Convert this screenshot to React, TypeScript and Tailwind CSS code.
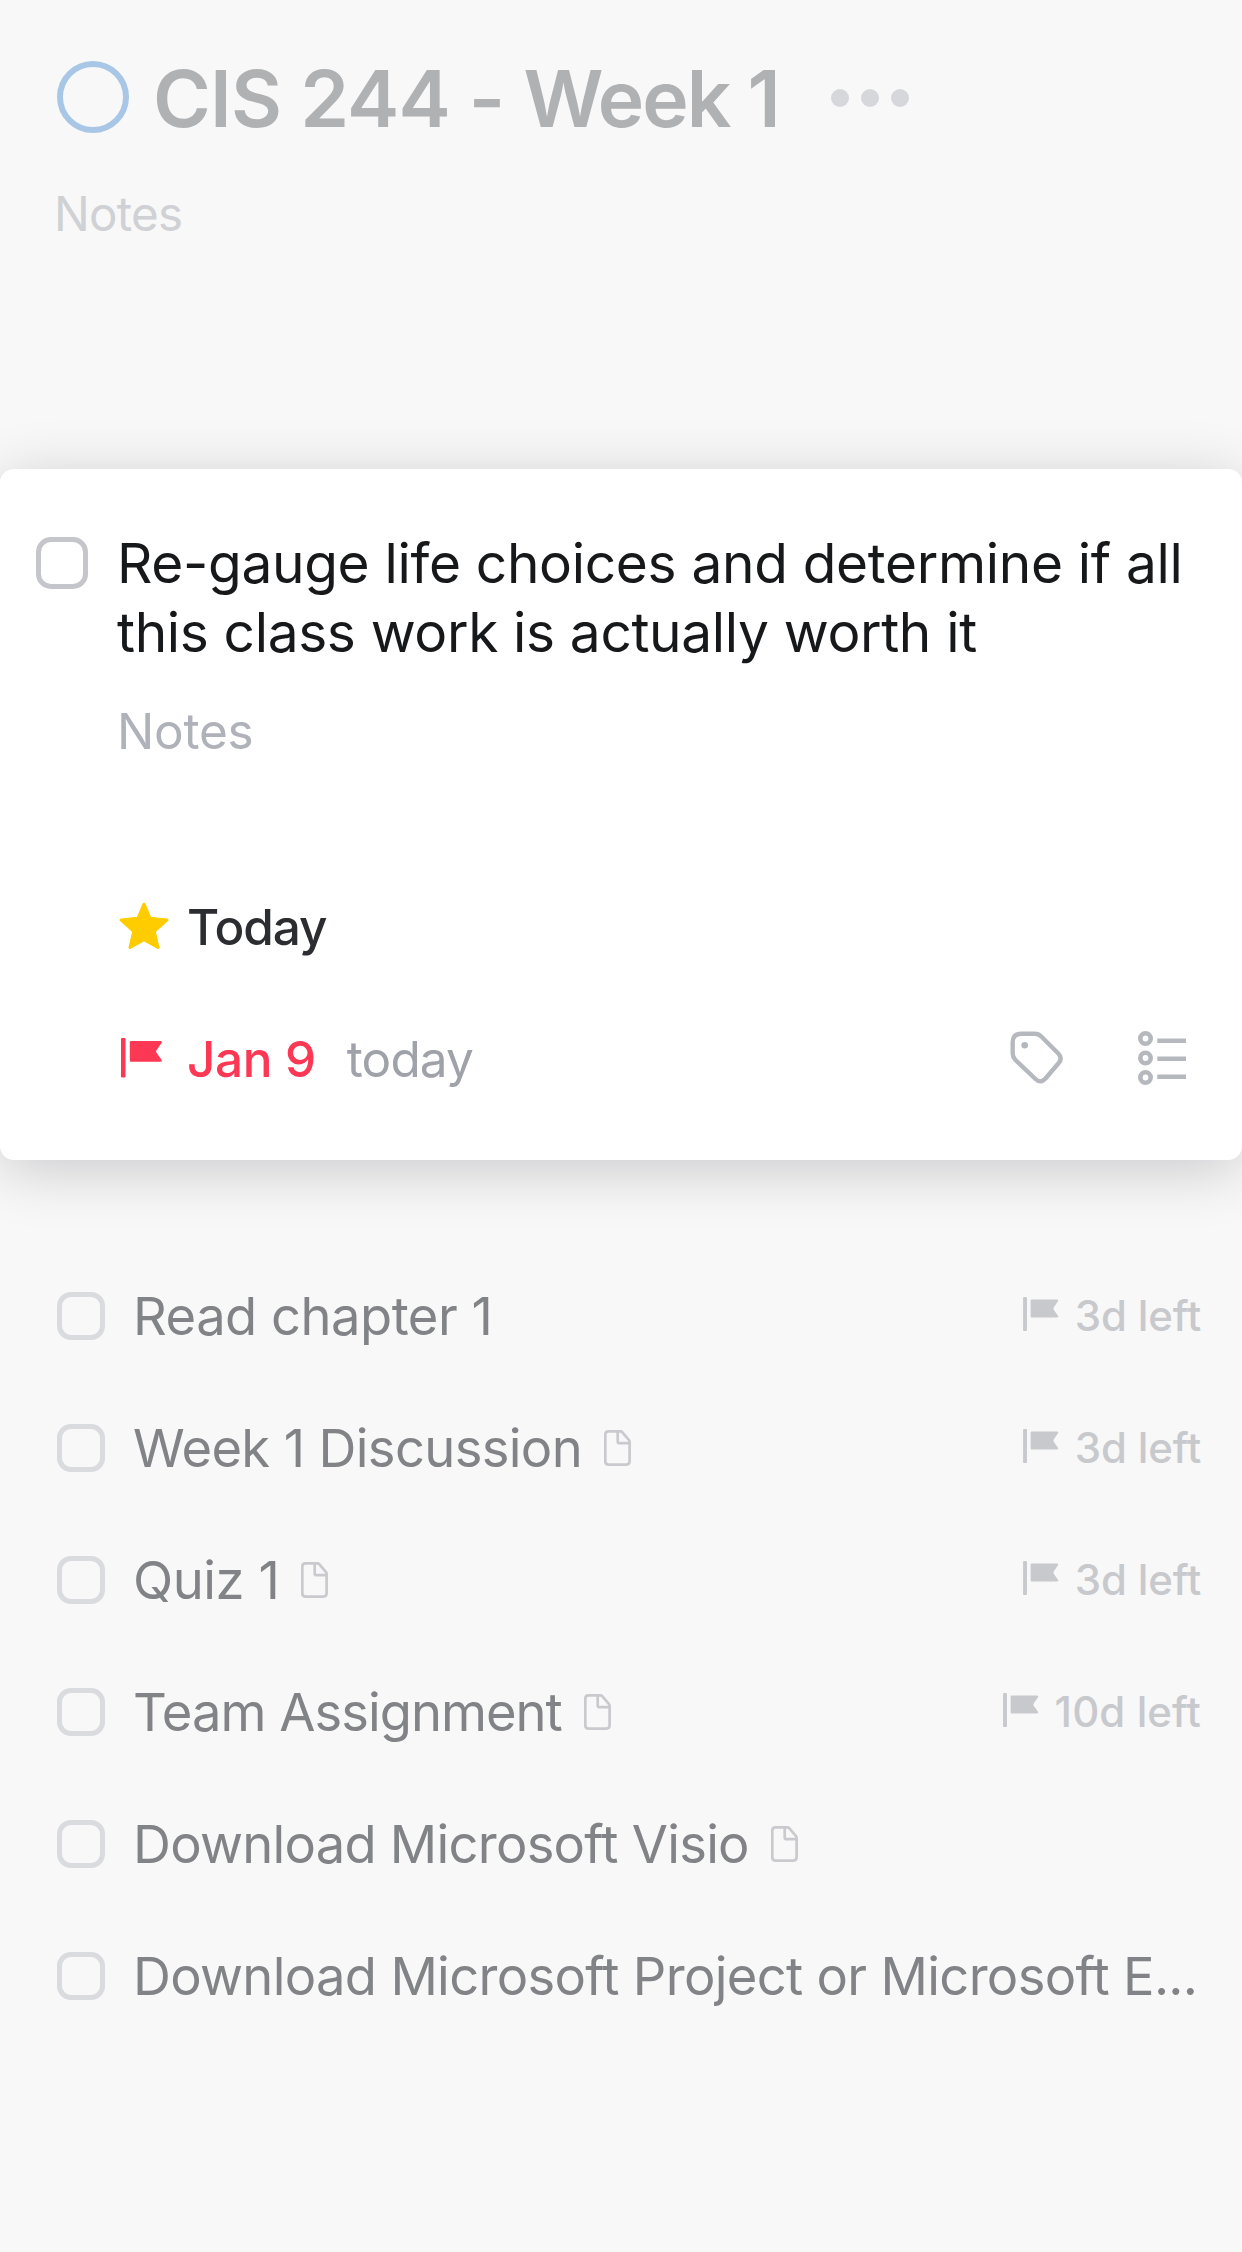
type Task = {
  title: string;
  tracking: string;
  hasNote?: boolean;
  deadline?: string;
  deadlineTracking?: string;
};

const tasks: Task[] = [
  { title: 'Read chapter 1', tracking: 'tracking-[-0.5px]', deadline: '3d left', deadlineTracking: 'tracking-[-0.19px]' },
  { title: 'Week 1 Discussion', tracking: 'tracking-[-0.64px]', hasNote: true, deadline: '3d left', deadlineTracking: 'tracking-[-0.19px]' },
  { title: 'Quiz 1', tracking: 'tracking-[-0.45px]', hasNote: true, deadline: '3d left', deadlineTracking: 'tracking-[-0.19px]' },
  { title: 'Team Assignment', tracking: 'tracking-[-0.98px]', hasNote: true, deadline: '10d left', deadlineTracking: 'tracking-[0.09px]' },
  { title: 'Download Microsoft Visio', tracking: 'tracking-[-0.74px]', hasNote: true },
  { title: 'Download Microsoft Project or Microsoft E...', tracking: 'tracking-[-0.68px]' },
];

function FlagIcon({ className }: { className: string }) {
  return (
    <svg viewBox="0 0 41 40" fill="currentColor" className={className}>
      <rect x="0" y="0" width="4.5" height="39.5" rx="1.2" />
      <path d="M10 3h29.5q2 .3 1 2l-4.8 7q-1 1.6 0 3.1l4.8 6.6q1 1.8-1 2.1H10q-1.2 0-1.2-1.2V4.2Q8.8 3 10 3z" />
    </svg>
  );
}

function NoteIcon() {
  return (
    <svg viewBox="0 0 27 36" fill="none" stroke="#cacace" strokeWidth="2.7" strokeLinejoin="round" className="h-9 w-[27px] shrink-0">
      <path d="M4.3 1.4h12.2q1 0 1.7.8l6.6 7.6q.8.9.8 2v19.5q0 3.3-3.3 3.3H4.6q-3.3 0-3.3-3.3V4.7q0-3.3 3-3.3z" />
      <path d="M13.7 1.5v9.900q0 1.800 1.800 1.800h10" />
    </svg>
  );
}

function StarIcon() {
  return (
    <svg viewBox="0 0 50 48" fill="#ffcc00" stroke="#ffcc00" strokeWidth="3" strokeLinejoin="round" className="h-12 w-[50px] shrink-0">
      <path d="M25 2.2 31 16.3 48 18 35.2 29.3 39 45.5 25 37.600 11 45.500 14.800 29.300 2 18 19 16.300z" />
    </svg>
  );
}

function TagIcon() {
  return (
    <svg viewBox="0 0 54 54" fill="none" className="h-[54px] w-[54px]">
      <path
        d="M11.5 2.7H24.5Q28.500 2.700 31.300 5.500L48.300 22.500Q53 27.500 48.300 32.500L35.500 47.500Q30.500 53 25.200 47.800L5.300 28.800Q2.700 26 2.700 22.500V11.500Q2.700 2.700 11.500 2.700z"
        stroke="#b5b8bd"
        strokeWidth="4.4"
      />
      <circle cx="14.7" cy="14.3" r="3.3" fill="#b5b8bd" />
    </svg>
  );
}

function ChecklistIcon() {
  return (
    <svg viewBox="0 0 48 54" fill="none" stroke="#b5b8bd" className="h-[54px] w-12">
      <g strokeWidth="4.6">
        <circle cx="7.5" cy="7.5" r="5.2" />
        <circle cx="7.5" cy="27" r="5.2" />
        <circle cx="7.5" cy="46.5" r="5.2" />
      </g>
      <path d="M19.3 9.7H48M19.3 27.7H48M19.3 45.7H48" strokeWidth="4.4" />
    </svg>
  );
}

function TaskRow({ task }: { task: Task }) {
  return (
    <li className="flex h-[132px] items-center pl-[57px] pr-[41px]">
      <span className="h-12 w-12 shrink-0 rounded-[14px] border-[5px] border-[#dadbde]" />
      <span className={`ml-7 whitespace-nowrap text-[52.5px] leading-[66px] text-[#828386] ${task.tracking}`}>{task.title}</span>
      {task.hasNote && (
        <span className="ml-[22px]">
          <NoteIcon />
        </span>
      )}
      {task.deadline && (
        <span className="ml-auto flex items-center text-[#c8c9cd]">
          <FlagIcon className="mb-1 h-[34.5px] w-[35.5px]" />
          <span className={`ml-4 whitespace-nowrap text-[42px] font-medium leading-[52px] ${task.deadlineTracking}`}>{task.deadline}</span>
        </span>
      )}
    </li>
  );
}

export default function App() {
  return (
    <div className="h-[2252px] w-[1242px] overflow-hidden bg-[#f8f8f8] font-['Inter',sans-serif]">
      <header className="h-[469px] pt-[57px]">
        <div className="flex h-20 items-center pl-[57px]">
          <span className="h-[72px] w-[72px] shrink-0 rounded-full border-[6px] border-[#a8c7e6]" />
          <h1 className="ml-6 mt-[3px] w-[623px] whitespace-nowrap text-[78.5px] font-semibold leading-[80px] tracking-[-1.9px] text-[#afb1b3]">
            <span className="tracking-[-0.82px]">CIS 244 - </span>Week 1
          </h1>
          <span className="ml-[55px] mt-0.5 flex gap-3">
            <i className="h-[18px] w-[18px] rounded-full bg-[#d6d7db]" />
            <i className="h-[18px] w-[18px] rounded-full bg-[#d6d7db]" />
            <i className="h-[18px] w-[18px] rounded-full bg-[#d6d7db]" />
          </span>
        </div>
        <p className="ml-[54px] mt-[47px] text-[47.5px] leading-[60px] tracking-[-0.76px] text-[#d0d1d4]">Notes</p>
      </header>

      <section className="relative h-[691px] rounded-[14px] bg-white shadow-[0_10px_60px_rgba(0,0,20,0.19)]">
        <div className="flex pl-9 pt-[60px]">
          <span className="mt-2 h-[52px] w-[52px] shrink-0 rounded-[15px] border-[5px] border-[#c5c5cc]" />
          <div className="ml-7 whitespace-nowrap">
            <p className="ml-px text-[55px] leading-[69px] tracking-[-0.32px] text-[#17181a]">Re-gauge life choices and determine if all</p>
            <p className="ml-px text-[55px] leading-[69px] tracking-[-0.35px] text-[#17181a]">this class work is actually worth it</p>
            <p className="ml-px mt-[34px] text-[49.5px] leading-[60px] tracking-[-0.26px] text-[#b0b2b9]">Notes</p>
          </div>
        </div>
        <div className="mt-[135px] flex h-[60px] items-center pl-[119px]">
          <StarIcon />
          <span className="ml-[18px] mt-px text-[49.5px] font-medium leading-[60px] tracking-[-1.07px] text-[#2b2d30]">Today</span>
        </div>
        <div className="mt-[72px] flex h-[60px] items-center pl-[121px] pr-[56px]">
          <FlagIcon className="mb-px h-10 w-[41px] text-[#fc3855]" />
          <span className="ml-[25px] mt-0.5 whitespace-nowrap text-[49.5px] font-medium leading-[60px] tracking-[-0.39px] text-[#fc3855]">Jan 9</span>
          <span className="ml-[31px] mt-0.5 text-[49.5px] leading-[60px] tracking-[-0.9px] text-[#9fa2a8]">today</span>
          <span className="ml-auto flex gap-[74px]">
            <TagIcon />
            <ChecklistIcon />
          </span>
        </div>
      </section>

      <ul className="mt-[90px]">
        {tasks.map((task) => (
          <TaskRow key={task.title} task={task} />
        ))}
      </ul>
    </div>
  );
}
